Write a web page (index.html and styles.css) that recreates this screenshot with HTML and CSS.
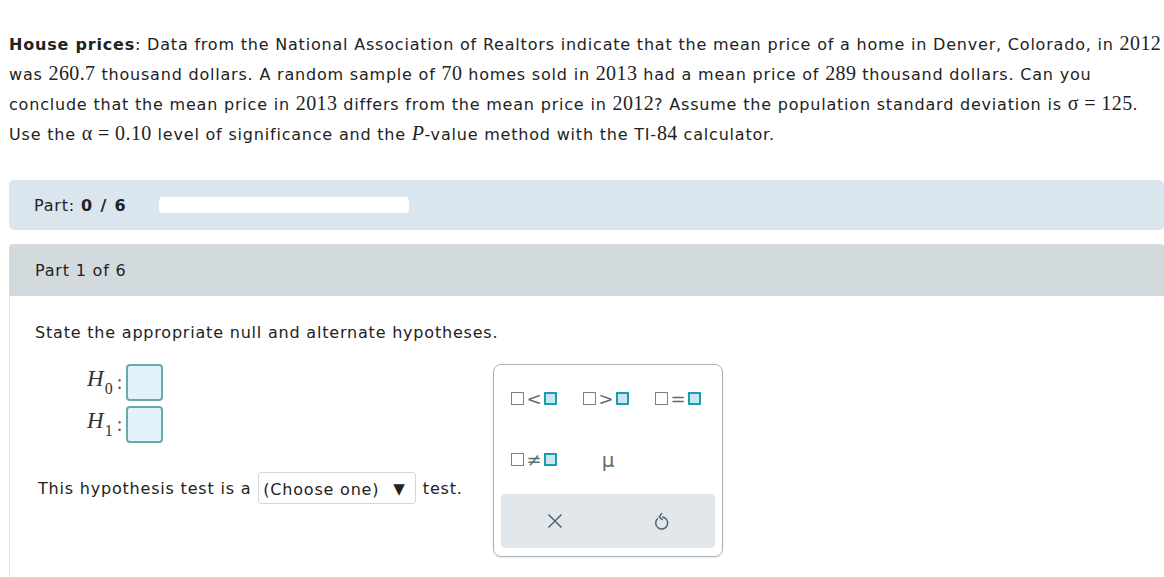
FILE: index.html
```html
<!DOCTYPE html>
<html>
<head>
<meta charset="utf-8">
<link rel="stylesheet" href="styles.css">
</head>
<body>
<div class="page">
  <p class="problem"><b>House prices</b>: Data from the National Association of Realtors indicate that the mean price of a home in Denver, Colorado, in <span class="m">2012</span><br>was <span class="m">260.7</span> thousand dollars. A random sample of <span class="m">70</span> homes sold in <span class="m">2013</span> had a mean price of <span class="m">289</span> thousand dollars. Can you<br>conclude that the mean price in <span class="m">2013</span> differs from the mean price in <span class="m">2012</span>? Assume the population standard deviation is <span class="m">σ = 125</span>.<br>Use the <span class="m">α = 0.10</span> level of significance and the <span class="m"><i>P</i></span>-value method with the TI-<span class="m">84</span> calculator.</p>

  <div class="progress">
    <span class="plabel">Part: <b>0 / 6</b></span>
    <span class="pbar"></span>
  </div>

  <div class="part">
    <div class="part-head">Part 1 of 6</div>
    <div class="part-body">
      <p class="prompt">State the appropriate null and alternate hypotheses.</p>
      <div class="work">
        <div class="left">
          <div class="hyps">
            <div class="hrow"><span class="hlabel"><i>H</i><sub>0</sub></span><span class="colon">:</span><span class="ansbox"></span></div>
            <div class="hrow"><span class="hlabel"><i>H</i><sub>1</sub></span><span class="colon">:</span><span class="ansbox"></span></div>
          </div>
          <div class="testline">This hypothesis test is a <span class="select">(Choose one) <span class="arrow">▼</span></span> test.</div>
        </div>
        <div class="keypad">
          <div class="keys">
            <span class="key"><span class="sq"></span><span class="op">&lt;</span><span class="sq blue"></span></span>
            <span class="key"><span class="sq"></span><span class="op">&gt;</span><span class="sq blue"></span></span>
            <span class="key"><span class="sq"></span><span class="op">=</span><span class="sq blue"></span></span>
            <span class="key"><span class="sq"></span><span class="op">≠</span><span class="sq blue"></span></span>
            <span class="key mu">μ</span>
          </div>
          <div class="actions">
            <svg width="18" height="18" viewBox="0 0 18 18"><path d="M2.5 2.5 L15.5 15.5 M15.5 2.5 L2.5 15.5" stroke="#4f6670" stroke-width="1.5" fill="none"/></svg>
            <svg width="18" height="20" viewBox="0 0 18 20"><path d="M4.8 7.4 A6 6 0 1 0 9 6" stroke="#4f6670" stroke-width="1.5" fill="none"/><path d="M8.6 2.6 L6.2 6 L9.2 8.6" stroke="#4f6670" stroke-width="1.5" fill="none" stroke-linejoin="round" stroke-linecap="round"/></svg>
          </div>
        </div>
      </div>
    </div>
  </div>
</div>
</body>
</html>
```

FILE: styles.css
```css
html, body {
  margin: 0;
  padding: 0;
  background: #ffffff;
}
body {
  font-family: "DejaVu Sans", Verdana, sans-serif;
  font-size: 16px;
  letter-spacing: 0.8px;
  color: #222;
  overflow: hidden;
}
.page {
  padding: 30px 0 0 9px;
  width: 1180px;
}
.problem {
  margin: 0;
  line-height: 30px;
  width: 1200px;
  white-space: nowrap;
}
.m {
  font-family: "Liberation Serif", "Times New Roman", serif;
  font-size: 20px;
  line-height: 1;
  letter-spacing: 0.4px;
}
.progress {
  margin-top: 30px;
  width: 1155px;
  height: 50px;
  background: #dae5ee;
  border-radius: 5px;
  display: flex;
  align-items: center;
  padding-left: 25px;
  box-sizing: border-box;
  gap: 32px;
}
.plabel b {
  letter-spacing: 1.4px;
}
.pbar {
  width: 250px;
  height: 16px;
  background: #fff;
  border-radius: 4px;
}
.part {
  margin-top: 14px;
  width: 1155px;
}
.part-head {
  height: 52px;
  background: #d3dadd;
  border-radius: 4px 4px 0 0;
  display: flex;
  align-items: center;
  padding-left: 26px;
}
.part-body {
  border-left: 1px solid #dde3e6;
  padding: 25px 0 40px 25px;
}
.prompt {
  margin: 0;
  line-height: 24px;
}
.work {
  display: flex;
  margin-top: 7px;
}
.left {
  width: 458px;
}
.hyps {
  padding: 12px 0 0 52px;
  display: flex;
  flex-direction: column;
  gap: 6px;
}
.hrow {
  display: flex;
  align-items: center;
  height: 36px;
}
.hlabel {
  font-family: "Liberation Serif", "Times New Roman", serif;
  font-size: 23px;
  letter-spacing: 0;
  color: #333;
}
.hlabel sub {
  font-size: 16px;
  font-style: normal;
  vertical-align: -8px;
  margin-left: 1px;
}
.colon {
  font-family: "Liberation Serif", serif;
  font-size: 20px;
  color: #555;
  margin: 0 3px 0 4px;
}
.ansbox {
  width: 33px;
  height: 33px;
  background: #e1f4f9;
  border: 2px solid #6aa9ab;
  border-radius: 4px;
}
.testline {
  margin-top: 30px;
  padding-left: 3px;
  display: flex;
  align-items: center;
  gap: 7px;
}
.select {
  display: inline-flex;
  align-items: center;
  height: 32px;
  padding: 2px 10px 0 4px;
  box-sizing: border-box;
  border: 1px solid #d4d8da;
  border-radius: 3px;
  margin-left: 0;
  gap: 14px;
}
.arrow {
  font-size: 15px;
  letter-spacing: 0;
}
.keypad {
  margin-top: 12px;
  width: 230px;
  height: 193px;
  border: 1px solid #a9b3b8;
  border-radius: 8px;
  padding: 0 7px 8px 7px;
  box-sizing: border-box;
  display: flex;
  flex-direction: column;
  justify-content: space-between;
  box-shadow: 0 1px 2px rgba(0,0,0,0.08);
}
.keys {
  display: grid;
  grid-template-columns: repeat(3, 72px);
  grid-auto-rows: 61px;
  padding-top: 3px;
  margin-left: -3px;
}
.key {
  display: flex;
  align-items: center;
  justify-content: center;
  color: #5a6e76;
  font-size: 18px;
  letter-spacing: 0;
}
.key.mu {
  font-size: 20px;
  margin-left: 4px;
}
.sq {
  width: 13px;
  height: 13px;
  border: 1.5px solid #738289;
  box-sizing: border-box;
  display: inline-block;
}
.sq.blue {
  border: 2px solid #1e9bb0;
  background: #c9e7ef;
}
.op {
  margin: 0 2px;
  line-height: 1;
}
.actions {
  height: 54px;
  background: #e1e7ea;
  border-radius: 4px;
  display: flex;
  align-items: center;
  justify-content: space-between;
  padding: 0 44px 0 45px;
}
```
